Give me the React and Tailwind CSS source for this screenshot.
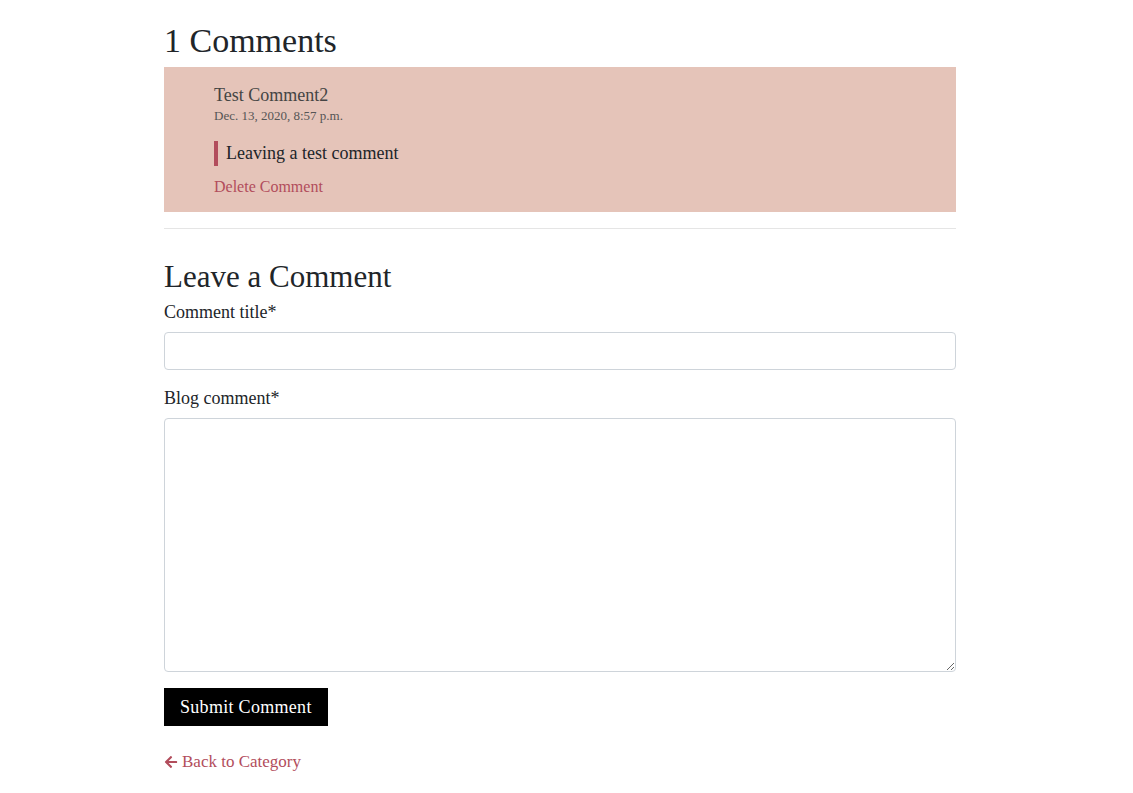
import React from "react";

const App = () => {
  return (
    <div
      className="min-h-screen bg-white text-[#212529]"
      style={{ fontFamily: '"Liberation Serif", "DejaVu Serif", serif' }}
    >
      <div className="w-[792px] ml-[164px] pt-[20px]">
        {/* Comments */}
        <h3 className="text-[34px] leading-[42px] mb-[5px]">1 Comments</h3>
        <div className="bg-[#e5c4b9] pl-[50px] pt-[16px] pb-[13px]">
          <p className="text-[18px] leading-[24px] text-[#444]">Test Comment2</p>
          <p className="text-[13px] leading-[18px] text-[#555]">
            Dec. 13, 2020, 8:57 p.m.
          </p>
          <blockquote className="mt-[16px] border-l-[4px] border-[#b24d5c] pl-[8px] text-[18px] leading-[25px]">
            Leaving a test comment
          </blockquote>
          <a href="#" className="block mt-[9px] text-[16px] leading-[24px] text-[#b24d5c]">
            Delete Comment
          </a>
        </div>
        <hr className="mt-[16px] border-t border-[#e5e5e5]" />

        {/* Form */}
        <h3 className="mt-[30px] text-[31px] leading-[36px] mb-[5px]">Leave a Comment</h3>
        <form onSubmit={(e) => e.preventDefault()}>
          <label className="block text-[18px] leading-[24px] mb-[8px]">Comment title*</label>
          <input
            type="text"
            className="block w-full h-[38px] border border-[#ced4da] rounded-[4px] px-3 mb-[16px]"
          />
          <label className="block text-[18px] leading-[24px] mb-[8px]">Blog comment*</label>
          <textarea className="block w-full h-[254px] border border-[#ced4da] rounded-[4px] px-3 py-2 mb-[16px]" />
          <button
            type="submit"
            className="bg-black text-white text-[18px] leading-[24px] px-[16px] h-[38px] tracking-[0.3px]"
          >
            Submit Comment
          </button>
        </form>

        <a href="#" className="flex items-center gap-[4px] mt-[24px] text-[17px] leading-[24px] text-[#b24d5c]">
          <svg width="14" height="14" viewBox="0 0 448 512" fill="currentColor">
            <path d="M257.5 445.1l-22.2 22.2c-9.4 9.4-24.6 9.4-33.900 0L7 273c-9.4-9.4-9.4-24.6 0-33.9L201.4 44.7c9.4-9.4 24.6-9.4 33.9 0l22.2 22.2c9.5 9.5 9.3 25-.4 34.3L136.6 216H424c13.3 0 24 10.7 24 24v32c0 13.3-10.7 24-24 24H136.6l120.5 114.8c9.8 9.3 10 24.8.4 34.3z" />
          </svg>
          Back to Category
        </a>
      </div>
    </div>
  );
};

export default App;
